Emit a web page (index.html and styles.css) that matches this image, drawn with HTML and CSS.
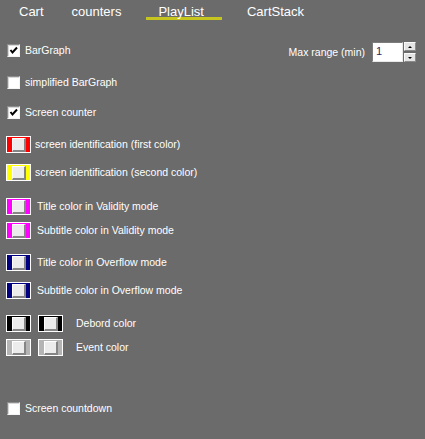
FILE: index.html
```html
<!DOCTYPE html>
<html>
<head>
<meta charset="utf-8">
<link rel="stylesheet" href="styles.css">
</head>
<body>
<nav class="tabs">
  <span class="tab">Cart</span>
  <span class="tab">counters</span>
  <span class="tab active">PlayList</span>
  <span class="tab">CartStack</span>
</nav>
<main class="panel">
  <div class="row top-row">
    <label class="check first">
      <span class="box"><svg width="9" height="9" viewBox="0 0 9 9"><polyline points="1.5,4 3.5,6.5 8,1.5" fill="none" stroke="#000" stroke-width="2"/></svg></span>
      <span class="lbl">BarGraph</span>
    </label>
    <div class="range">
      <span class="lbl">Max range (min)</span>
      <span class="input">1</span>
      <span class="spin"><span class="btn"><i class="up"></i></span><span class="btn"><i class="down"></i></span></span>
    </div>
  </div>

  <label class="row check mt14">
    <span class="box"></span>
    <span class="lbl">simplified BarGraph</span>
  </label>

  <label class="row check mt17">
    <span class="box"><svg width="9" height="9" viewBox="0 0 9 9"><polyline points="1.5,4 3.5,6.5 8,1.5" fill="none" stroke="#000" stroke-width="2"/></svg></span>
    <span class="lbl">Screen counter</span>
  </label>

  <div class="row color mt17 near">
    <span class="swatch red"><span class="knob"></span></span>
    <span class="lbl">screen identification (first color)</span>
  </div>
  <div class="row color mt11 near">
    <span class="swatch yellow"><span class="knob"></span></span>
    <span class="lbl">screen identification (second color)</span>
  </div>

  <div class="row color mt17">
    <span class="swatch magenta"><span class="knob"></span></span>
    <span class="lbl">Title color in Validity mode</span>
  </div>
  <div class="row color mt7">
    <span class="swatch magenta"><span class="knob"></span></span>
    <span class="lbl">Subtitle color in Validity mode</span>
  </div>

  <div class="row color mt15">
    <span class="swatch navy"><span class="knob"></span></span>
    <span class="lbl">Title color in Overflow mode</span>
  </div>
  <div class="row color mt11">
    <span class="swatch navy"><span class="knob"></span></span>
    <span class="lbl">Subtitle color in Overflow mode</span>
  </div>

  <div class="row color pair mt16">
    <span class="swatch black"><span class="knob"></span></span>
    <span class="swatch black"><span class="knob"></span></span>
    <span class="lbl">Debord color</span>
  </div>
  <div class="row color pair mt7">
    <span class="swatch grey"><span class="knob"></span></span>
    <span class="swatch grey"><span class="knob"></span></span>
    <span class="lbl">Event color</span>
  </div>

  <label class="row check mt46">
    <span class="box"></span>
    <span class="lbl">Screen countdown</span>
  </label>
</main>
</body>
</html>
```

FILE: styles.css
```css
html, body {
  margin: 0;
  padding: 0;
  background: #6b6b6b;
  width: 425px;
  height: 439px;
  overflow: hidden;
  font-family: "Liberation Sans", Arial, sans-serif;
  color: #ffffff;
}

.tabs {
  display: flex;
  padding: 4px 0 0 5px;
  height: 16px;
}

.tab {
  display: block;
  height: 13px;
  line-height: 15px;
  font-size: 13px;
  padding: 0 14px;
  white-space: nowrap;
}

.tab.active {
  margin: 0 11px;
  padding: 0 18px 0 12px;
  border-bottom: 3px solid #c6c51e;
}

.panel {
  padding: 22px 9px 0 6px;
}

.row {
  display: flex;
  align-items: center;
}

.lbl {
  font-size: 10.5px;
  line-height: 13px;
  white-space: nowrap;
}

.top-row {
  justify-content: space-between;
  align-items: flex-start;
  height: 20px;
}

.check {
  display: flex;
  align-items: center;
  height: 13px;
}

.check.first {
  margin-top: 2px;
}

.box {
  box-sizing: border-box;
  width: 13px;
  height: 13px;
  margin-left: 1px;
  margin-right: 5px;
  background: #ffffff;
  border-style: solid;
  border-width: 1px;
  border-color: #8c8c8c #f4f4f4 #f4f4f4 #8c8c8c;
  box-shadow: inset 1px 1px 0 #d8d8d8;
  display: flex;
  align-items: center;
  justify-content: center;
}

.box svg {
  display: block;
}

.range {
  display: flex;
  align-items: center;
  height: 20px;
}

.input {
  box-sizing: border-box;
  width: 31px;
  height: 20px;
  margin-left: 7px;
  background: #ffffff;
  border-style: solid;
  border-width: 1px;
  border-color: #7c7c7c #e8e8e8 #e8e8e8 #7c7c7c;
  color: #2a1f6a;
  font-size: 11px;
  line-height: 17px;
  padding-left: 3px;
}

.spin {
  display: flex;
  flex-direction: column;
  justify-content: space-between;
  height: 20px;
  margin-left: 1px;
}

.spin .btn {
  box-sizing: border-box;
  width: 12px;
  height: 9px;
  background: #e4e4e4;
  border-style: solid;
  border-width: 1px;
  border-color: #fafafa #8a8a8a #8a8a8a #fafafa;
  display: flex;
  align-items: center;
  justify-content: center;
}

.spin i {
  display: block;
  width: 0;
  height: 0;
  border-left: 2px solid transparent;
  border-right: 2px solid transparent;
}

.spin i.up {
  border-bottom: 2px solid #000;
}

.spin i.down {
  border-top: 2px solid #000;
}

.color {
  height: 17px;
}

.swatch {
  box-sizing: border-box;
  width: 25px;
  height: 17px;
  border: 1px solid #ffffff;
  padding: 1px 0 0 5px;
  margin-right: 6px;
  display: flex;
  align-items: flex-start;
}

.near .swatch {
  margin-right: 4px;
}

.pair .swatch {
  margin-right: 7px;
}

.pair .lbl {
  margin-left: 6px;
}

.knob {
  box-sizing: border-box;
  width: 14px;
  height: 14px;
  background: #ececec;
  border-style: solid;
  border-width: 1px 2px 2px 1px;
  border-color: #ffffff #858585 #858585 #ffffff;
}

.red { background: #ff0000; }
.yellow { background: #ffff00; }
.magenta { background: #ff00ff; }
.navy { background: #000080; }
.black { background: #000000; }
.grey { background: #b4b4b4; }

.mt7 { margin-top: 7px; }
.mt11 { margin-top: 11px; }
.mt14 { margin-top: 14px; }
.mt15 { margin-top: 15px; }
.mt16 { margin-top: 16px; }
.mt17 { margin-top: 17px; }
.mt46 { margin-top: 46px; }
```
